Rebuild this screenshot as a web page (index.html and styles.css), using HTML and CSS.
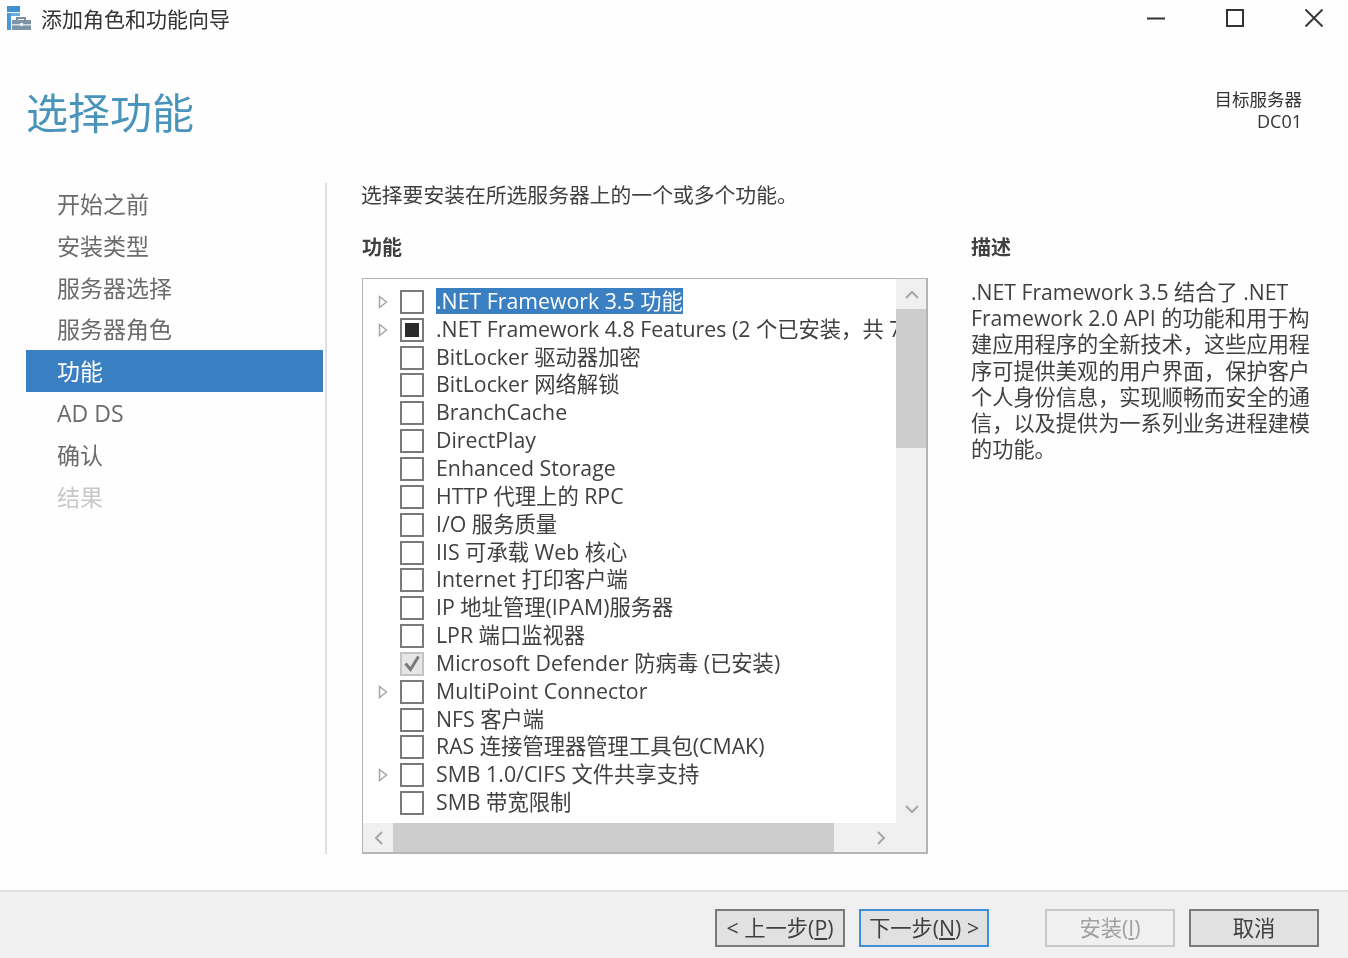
FILE: index.html
```html
<!DOCTYPE html>
<html lang="zh-CN">
<head>
<meta charset="utf-8">
<title>添加角色和功能向导</title>
<link rel="stylesheet" href="styles.css">
</head>
<body>
<div class="window">
  <div class="titlebar">
    <svg class="app-icon" width="26" height="25" viewBox="0 0 26 25">
      <rect x="1" y="0" width="13" height="6" fill="#3f8fd2"/>
      <rect x="1" y="7" width="4" height="17" fill="#4a97d6"/>
      <rect x="5" y="7" width="9" height="3" fill="#6aaee0"/>
      <path d="M11 12.500v-2.500h8v2.500" fill="none" stroke="#7f8fa0" stroke-width="2" transform="translate(0 2)"/>
      <rect x="6" y="14" width="19" height="10" fill="#7d93a8"/>
      <rect x="6" y="18" width="19" height="1.500" fill="#d5dde5"/>
      <rect x="14" y="17" width="3" height="3" fill="#eef2f5"/>
    </svg>
    <span class="title-text">添加角色和功能向导</span>
    <div class="win-controls">
      <svg width="20" height="20" viewBox="0 0 20 20"><path d="M1 10.500h18" stroke="#333" stroke-width="2"/></svg>
      <svg width="20" height="20" viewBox="0 0 20 20"><rect x="2" y="2" width="16" height="16" fill="none" stroke="#333" stroke-width="2"/></svg>
      <svg width="20" height="20" viewBox="0 0 20 20"><path d="M1.500 1.500l17 17M18.500 1.500l-17 17" stroke="#333" stroke-width="1.800"/></svg>
    </div>
  </div>

  <div class="header">
    <h1 class="page-title">选择功能</h1>
    <div class="server">
      <div class="server-label">目标服务器</div>
      <div class="server-name">DC01</div>
    </div>
  </div>

  <div class="content">
    <nav class="sidebar">
      <div class="nav-item">开始之前</div>
      <div class="nav-item">安装类型</div>
      <div class="nav-item">服务器选择</div>
      <div class="nav-item">服务器角色</div>
      <div class="nav-item active">功能</div>
      <div class="nav-item">AD DS</div>
      <div class="nav-item">确认</div>
      <div class="nav-item disabled">结果</div>
    </nav>

    <main class="main">
      <p class="intro">选择要安装在所选服务器上的一个或多个功能。</p>
      <div class="columns">
        <section class="features">
          <h2 class="section-head">功能</h2>
          <div class="listbox">
            <div class="list-top">
              <div class="rows">
                <div class="row"><svg class="twisty" width="10" height="14" viewBox="0 0 10 14"><path d="M1.500 1.500L8.500 7L1.500 12.500Z" fill="#fff" stroke="#a6a6a6" stroke-width="1.500"/></svg><span class="box"></span><span class="label selected">.NET Framework 3.5 功能</span></div>
                <div class="row"><svg class="twisty" width="10" height="14" viewBox="0 0 10 14"><path d="M1.500 1.500L8.500 7L1.500 12.500Z" fill="#fff" stroke="#a6a6a6" stroke-width="1.500"/></svg><span class="box partial"></span><span class="label">.NET Framework 4.8 Features (2 个已安装，共 7 个)</span></div>
                <div class="row"><span class="twisty-space"></span><span class="box"></span><span class="label">BitLocker 驱动器加密</span></div>
                <div class="row"><span class="twisty-space"></span><span class="box"></span><span class="label">BitLocker 网络解锁</span></div>
                <div class="row"><span class="twisty-space"></span><span class="box"></span><span class="label">BranchCache</span></div>
                <div class="row"><span class="twisty-space"></span><span class="box"></span><span class="label">DirectPlay</span></div>
                <div class="row"><span class="twisty-space"></span><span class="box"></span><span class="label">Enhanced Storage</span></div>
                <div class="row"><span class="twisty-space"></span><span class="box"></span><span class="label">HTTP 代理上的 RPC</span></div>
                <div class="row"><span class="twisty-space"></span><span class="box"></span><span class="label">I/O 服务质量</span></div>
                <div class="row"><span class="twisty-space"></span><span class="box"></span><span class="label">IIS 可承载 Web 核心</span></div>
                <div class="row"><span class="twisty-space"></span><span class="box"></span><span class="label">Internet 打印客户端</span></div>
                <div class="row"><span class="twisty-space"></span><span class="box"></span><span class="label">IP 地址管理(IPAM)服务器</span></div>
                <div class="row"><span class="twisty-space"></span><span class="box"></span><span class="label">LPR 端口监视器</span></div>
                <div class="row"><span class="twisty-space"></span><span class="box checked"><svg width="20" height="20" viewBox="0 0 20 20"><path d="M3.500 9.500L8.500 15.500L16.500 2.500" fill="none" stroke="#7a7a7a" stroke-width="3"/></svg></span><span class="label">Microsoft Defender 防病毒 (已安装)</span></div>
                <div class="row"><svg class="twisty" width="10" height="14" viewBox="0 0 10 14"><path d="M1.500 1.500L8.500 7L1.500 12.500Z" fill="#fff" stroke="#a6a6a6" stroke-width="1.500"/></svg><span class="box"></span><span class="label">MultiPoint Connector</span></div>
                <div class="row"><span class="twisty-space"></span><span class="box"></span><span class="label">NFS 客户端</span></div>
                <div class="row"><span class="twisty-space"></span><span class="box"></span><span class="label">RAS 连接管理器管理工具包(CMAK)</span></div>
                <div class="row"><svg class="twisty" width="10" height="14" viewBox="0 0 10 14"><path d="M1.500 1.500L8.500 7L1.500 12.500Z" fill="#fff" stroke="#a6a6a6" stroke-width="1.500"/></svg><span class="box"></span><span class="label">SMB 1.0/CIFS 文件共享支持</span></div>
                <div class="row"><span class="twisty-space"></span><span class="box"></span><span class="label">SMB 带宽限制</span></div>
              </div>
              <div class="vscroll">
                <div class="sb-btn"><svg width="14" height="9" viewBox="0 0 14 9"><path d="M1 8L7 2L13 8" fill="none" stroke="#a6a6a6" stroke-width="2"/></svg></div>
                <div class="v-thumb"></div>
                <div class="sb-fill"></div>
                <div class="sb-btn"><svg width="14" height="9" viewBox="0 0 14 9"><path d="M1 1L7 7L13 1" fill="none" stroke="#a6a6a6" stroke-width="2"/></svg></div>
              </div>
            </div>
            <div class="hscroll">
              <div class="sb-btn"><svg width="9" height="14" viewBox="0 0 9 14"><path d="M8 1L2 7L8 13" fill="none" stroke="#a6a6a6" stroke-width="2"/></svg></div>
              <div class="h-thumb"></div>
              <div class="sb-fill"></div>
              <div class="sb-btn"><svg width="9" height="14" viewBox="0 0 9 14"><path d="M1 1L7 7L1 13" fill="none" stroke="#a6a6a6" stroke-width="2"/></svg></div>
              <div class="sb-corner"></div>
            </div>
          </div>
        </section>
        <aside class="description">
          <h2 class="section-head">描述</h2>
          <p class="desc-text">.NET Framework 3.5 结合了 .NET<br>Framework 2.0 API 的功能和用于构<br>建应用程序的全新技术，这些应用程<br>序可提供美观的用户界面，保护客户<br>个人身份信息，实现顺畅而安全的通<br>信，以及提供为一系列业务进程建模<br>的功能。</p>
        </aside>
      </div>
    </main>
  </div>

  <div class="footer">
    <button class="btn">&lt; 上一步(<u>P</u>)</button>
    <button class="btn primary">下一步(<u>N</u>) &gt;</button>
    <button class="btn disabled install">安装(<u>I</u>)</button>
    <button class="btn">取消</button>
  </div>
</div>
</body>
</html>
```
FILE: styles.css
```css
* { box-sizing: border-box; }
html, body { margin: 0; padding: 0; }
body {
  background: #fff;
  font-family: "Open Sans", "Noto Sans CJK SC", sans-serif;
  color: #404040;
  overflow: hidden;
}
.window {
  width: 1348px;
  height: 958px;
  display: flex;
  flex-direction: column;
  background: #fefefe;
  filter: blur(0.4px);
}
.titlebar {
  height: 40px;
  flex: none;
  display: flex;
  align-items: flex-start;
  padding: 6px 24px 0 6px;
}
.app-icon { flex: none; }
.title-text {
  margin-left: 9px;
  font-size: 21px;
  line-height: 26px;
  color: #333;
}
.win-controls {
  margin-left: auto;
  display: flex;
  gap: 59px;
  margin-top: 2px;
}
.header {
  height: 143px;
  flex: none;
  display: flex;
  justify-content: space-between;
  align-items: flex-start;
  padding: 0 46px 0 26px;
}
.page-title {
  margin: 43px 0 0;
  font-size: 42px;
  line-height: 60px;
  font-weight: 400;
  color: #4a93bb;
}
.server { margin-top: 48px; text-align: right; color: #333; }
.server-label { font-size: 17.500px; line-height: 22px; }
.server-name { font-size: 18px; line-height: 22px; }
.content { flex: 1; display: flex; min-height: 0; }
.sidebar {
  width: 301px;
  margin-left: 26px;
  flex: none;
  height: 671px;
  border-right: 2px solid #e0e0e0;
  padding-right: 2px;
}
.nav-item {
  height: 41.800px;
  line-height: 42px;
  padding-left: 31px;
  font-size: 23px;
  color: #6b6b6b;
}
.nav-item.active { background: #3a7fc1; color: #fff; }
.nav-item.disabled { color: #c8c8c8; }
.main { flex: 1; padding: 0 0 0 34px; min-width: 0; }
.intro {
  margin: 0;
  height: 24px;
  font-size: 20.800px;
  line-height: 24px;
  color: #404040;
}
.columns { display: flex; margin-top: 29px; }
.features { width: 610px; flex: none; padding-left: 1px; }
.section-head {
  margin: 0;
  font-size: 20px;
  line-height: 24px;
  font-weight: 700;
  color: #404040;
}
.listbox {
  margin-top: 18px;
  width: 566px;
  height: 576px;
  border: 2px solid #b4b4b4;
  border-width: 1px 2px 2px 1px;
  display: flex;
  flex-direction: column;
  background: #fff;
}
.list-top { flex: 1; display: flex; min-height: 0; }
.rows {
  flex: 1;
  min-width: 0;
  overflow: hidden;
  padding-top: 9px;
}
.row {
  height: 27.850px;
  display: flex;
  align-items: center;
  white-space: nowrap;
  padding-left: 15px;
}
.twisty { flex: none; }
.twisty-space { width: 10px; flex: none; }
.box {
  width: 24px;
  height: 24px;
  flex: none;
  margin-left: 12px;
  border: 2px solid #7a7a7a;
  background: #fff;
  display: flex;
  align-items: center;
  justify-content: center;
}
.box.partial::after {
  content: "";
  width: 14px;
  height: 14px;
  background: #2b2b2b;
}
.box.checked { background: #e6e6e6; border-color: #c4c4c4; }
.label {
  margin-left: 12px;
  font-size: 21.300px;
  line-height: 26px;
  margin-top: -2px;
  color: #404040;
}
.label.selected { background: #3a7fc1; color: #fff; margin-top: -1px; }
.vscroll {
  width: 30px;
  flex: none;
  display: flex;
  flex-direction: column;
  background: #f0f0f0;
  padding-left: 1px;
}
.sb-btn {
  width: 30px;
  height: 30px;
  flex: none;
  display: flex;
  align-items: center;
  justify-content: center;
}
.vscroll .sb-btn:last-child { padding-top: 3px; }
.v-thumb { height: 139px; flex: none; background: #cdcdcd; margin-left: -1px; }
.sb-fill { flex: 1; }
.hscroll {
  height: 29px;
  flex: none;
  display: flex;
  background: #f0f0f0;
}
.hscroll .sb-btn { height: 29px; }
.h-thumb { width: 441px; flex: none; background: #cdcdcd; }
.sb-corner { width: 30px; flex: none; }
.description { flex: 1; min-width: 0; }
.desc-text {
  margin: 19px 0 0;
  font-size: 21.200px;
  line-height: 26.200px;
  color: #404040;
  white-space: nowrap;
}
.footer {
  height: 68px;
  flex: none;
  background: #f0f0f0;
  border-top: 2px solid #e2e2e2;
  display: flex;
  align-items: flex-start;
  padding: 17px 29px 0 715px;
  gap: 14px;
}
.btn {
  width: 130px;
  height: 38px;
  padding: 0;
  border: 2px solid #7a7a7a;
  background: #e1e1e1;
  font-family: inherit;
  font-size: 21.300px;
  line-height: 30px;
  color: #404040;
}
.btn.primary { border-color: #3c8fdc; }
.btn.disabled { background: #f0f0f0; border-color: #c8c8c8; color: #a0a0a0; }
.btn.install { margin-left: 42px; }
```
